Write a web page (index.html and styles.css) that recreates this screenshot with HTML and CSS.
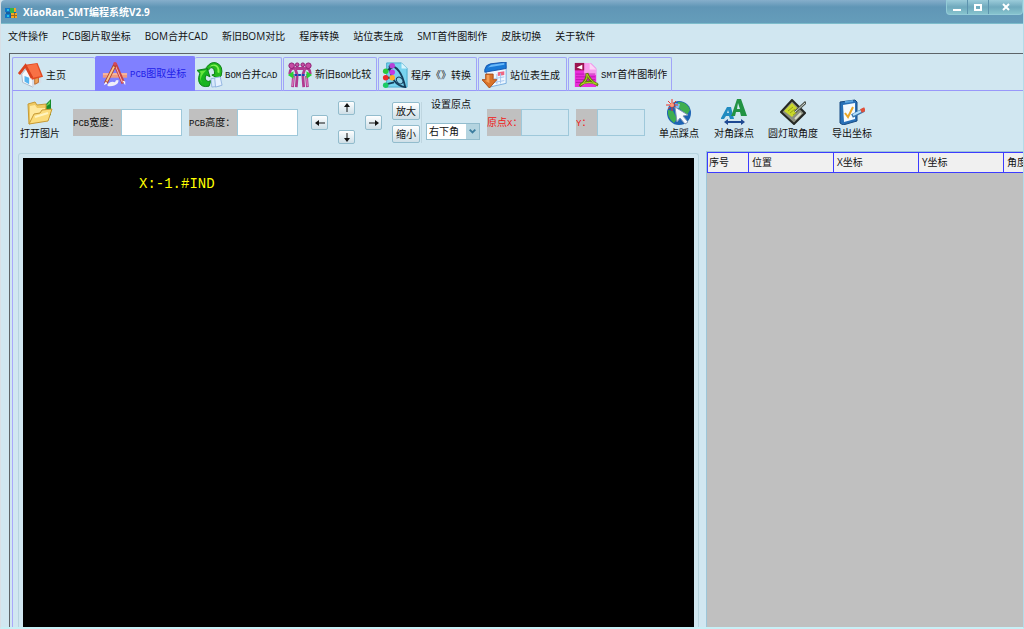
FILE: index.html
```html
<!DOCTYPE html>
<html lang="zh-CN">
<head>
<meta charset="utf-8">
<title>XiaoRan_SMT编程系统V2.9</title>
<link rel="stylesheet" href="styles.css">
</head>
<body>
<div class="app">
  <header class="titlebar">
    <svg class="logo" viewBox="0 0 12 12"><path fill="#17609c" d="M1 1h10v10H1z"/><path fill="#1277c8" d="M0 1h5v4H0zM0 7h5v4H0z"/><path fill="#35b34a" d="M5 1h4v5H5z"/><path fill="#f5a623" d="M6 6h6v5H6zM9 1h2v4H9z"/><path fill="#1fc3e8" d="M2 2h2v2H2zM2 8h2v2H2z"/><path fill="#9b6a20" d="M9 6h1v5H9zM6 8h6v1H6z"/></svg>
    <h1 class="title">XiaoRan_SMT编程系统V2.9</h1>
    <div class="window-buttons">
      <button class="winbtn" aria-label="最小化"><svg viewBox="0 0 10 8"><path fill="#fff" d="M1 6h8v2H1z"/></svg></button>
      <button class="winbtn" aria-label="最大化"><svg viewBox="0 0 10 8"><path fill="none" stroke="#fff" stroke-width="2" d="M2 2h6v5H2z"/></svg></button>
      <button class="winbtn winbtn-close" aria-label="关闭"><svg viewBox="0 0 10 8"><path fill="none" stroke="#fff" stroke-width="2" d="M2 1l6 6M8 1L2 7"/></svg></button>
    </div>
  </header>
  <nav class="menu">
    <button>文件操作</button><button>PCB图片取坐标</button><button>BOM合并CAD</button><button>新旧BOM对比</button><button>程序转换</button><button>站位表生成</button><button>SMT首件图制作</button><button>皮肤切换</button><button>关于软件</button>
  </nav>
  <main class="frame">
    <div class="tabs">
      <button class="tab tab-home">
        <svg viewBox="0 0 28 28"><path fill="#f4f8fc" stroke="#a9b6c6" d="M4 13l6-7 6 9v12L5 22z"/><path fill="#d6dde8" d="M15 15l10-3v10l-10 5z"/><path fill="#56b4ef" d="M7 15l5 2v7l-5-3z"/><path fill="#f0a355" stroke="#b8692c" d="M18 16l4-1v7l-4 2z"/><path fill="#e24a22" d="M8 3l13-2 6 15-12 3z"/><path fill="#f87145" d="M9 4l11-2 5 13-9 2z"/><path fill="none" stroke="#d9431f" stroke-width="3" d="M1 13L8 4l7 13"/></svg>主页</button>
      <button class="tab tab-pcb active">
        <svg viewBox="0 0 28 28"><path fill="#f09a80" d="M1 13h26v5H1z"/><path stroke="#ffd0b8" stroke-width="1" d="M1 14h26"/><path stroke="#c84145" stroke-width="4" d="M14 3l9 21"/><path stroke="#f7c1bb" stroke-width="1" d="M14 4l8 19"/><path stroke="#b2432d" stroke-width="4" d="M14 4L4 24"/><path stroke="#f8c98c" stroke-width="2" d="M13 6L5 22"/><circle cx="14" cy="3" r="2" fill="#d5485b"/><path fill="#fff" d="M2 26l2-4 2 2zM22 21l3 1v4z"/><path fill="#efeef9" d="M6 25q4-4 8-2 1-4 4-2l-1 3q-4 4-11 3z"/></svg><span class="label"><span class="latin">PCB</span>图取坐标</span></button>
      <button class="tab tab-bom">
        <svg viewBox="0 0 28 28"><path fill="#23b91e" stroke="#087b12" d="M10 6Q15-1 21 1q8 3 5 14l-3 3-7-4 3-1q0-7-4-7l-3 3z"/><path fill="#84f454" d="M13 5q5-4 9-1 3 3 2 8l-2-1q1-6-4-7z"/><path fill="#18b51e" stroke="#087b12" d="M0 9l11-2 3 9-4-2q-3 5 2 7l3-1-2 6Q4 28 2 21q-1-4 1-9z"/><path fill="#68e63e" d="M3 10l7-1-3 3q-5 6-1 11-4-4-2-11z"/><path fill="#d5e8fc" stroke="#92b4e0" d="M15 18l8-1 1 9-8 1z"/><path fill="#e4f0fe" stroke="#92b4e0" d="M19 17l6-1 2 9-7 2z"/></svg><span class="label"><span class="latin">BOM</span>合并<span class="latin">CAD</span></span></button>
      <button class="tab tab-compare">
        <svg viewBox="0 0 28 28"><g fill="none" stroke="#b13a90" stroke-width="3"><path d="M9 7Q3 6 3 12l4 3M19 7q6-1 6 5l-4 3M9 8l2 6M19 8l-2 6M7 15l-1 12M11 14l-1 13M21 15l1 12M17 14l1 13M9 7h10"/></g><g fill="#c64ca4" stroke="#8a1c70"><circle cx="5" cy="4" r="3"/><circle cx="23" cy="4" r="3"/><circle cx="11" cy="3" r="2"/><circle cx="17" cy="3" r="2"/></g><path stroke="#e58acb" d="M7 16L6 26M21 16l1 10"/><path fill="#27d233" d="M1 14l6-4v8zM27 14l-6-4v8z"/><path stroke="#1646b0" stroke-width="2" stroke-dasharray="3 1" d="M8 14h12"/></svg><span class="label">新旧<span class="latin">BOM</span>比较</span></button>
      <button class="tab tab-convert">
        <svg viewBox="0 0 28 28"><path fill="#78d3ef" stroke="#43a9cc" d="M5 1h16l6 6v20H5z"/><path fill="#d8f5fd" d="M21 1v6h6z"/><path fill="none" stroke="#153e5b" stroke-width="2" d="M8 4q12 0 17 23Q10 25 8 4M3 10l8-4M4 17h8M4 24l9-2"/><ellipse cx="19" cy="20" rx="4" ry="3" transform="rotate(50 19 20)" fill="#8ed4ea" stroke="#153e5b"/><circle cx="11" cy="4" r="3" fill="#b640d7"/><circle cx="4" cy="10" r="3" fill="#28c93d"/><circle cx="11" cy="11" r="3" fill="#c33ae4"/><circle cx="4" cy="17" r="3" fill="#ed2929"/><circle cx="11" cy="17" r="3" fill="#ffad28"/><circle cx="4" cy="25" r="3" fill="#1ccb65"/></svg><span class="label">程序《》转换</span></button>
      <button class="tab tab-station">
        <svg viewBox="0 0 28 28"><path fill="#edf7ff" stroke="#75acdf" d="M4 8l22-4v19L8 27z"/><path fill="#1979d6" stroke="#1454ad" d="M3 11V8q1-5 6-6l17-2v7z"/><path fill="#6ab9fa" d="M6 6l4-3 14-2v2z"/><path fill="#ef6783" d="M17 11l7-1v4l-7 1z"/><path stroke="#a3c5ee" d="M13 18l11-2M13 22l11-2M16 13v11M20 12v11"/><path fill="#d97328" stroke="#a84c14" d="M4 13h8v6h4L8 28 0 19h4z"/><path fill="#f3a057" d="M5 14h3v9l-5-3h2z"/></svg><span class="label">站位表生成</span></button>
      <button class="tab tab-first">
        <svg viewBox="0 0 28 28"><path fill="#e92fd9" d="M2 1h17l6 6v20H2z"/><path fill="#f89cee" d="M12 1h7l6 6v7H12z"/><path fill="#fbd6f6" d="M18 1l7 7h-7z"/><path stroke="#b815ad" d="M3 13h21M3 16h21M3 19h21M3 22h21"/><path fill="#9b144f" d="M2 1h10v8H2z"/><path fill="#fff" d="M4 6l6-3v5z"/><path fill="none" stroke="#5e7c0c" stroke-width="3" d="M15 12q1 8-8 14M15 12q3 9 12 13M8 24q9-5 18 0"/><path fill="none" stroke="#b8df24" d="M15 13q1 7-7 12M15 13q4 8 11 11M9 24q8-4 16 0"/></svg><span class="label"><span class="latin">SMT</span>首件图制作</span></button>
    </div>
    <section class="page">
      <div class="toolbar">
        <button class="tool tool-open">
          <svg viewBox="0 0 26 26"><path fill="#168c2c" d="M15 9l9-9v16l-6 2z"/><path fill="#6cd15b" d="M18 8l5-6v3z"/><path fill="#efca62" stroke="#c79a35" d="M1 5l7-2 2 3 9-1v15L2 25z"/><path fill="#ffe99f" d="M3 7l5-1 2 3h8v6L3 22z"/><path fill="#fbdc7c" stroke="#c79a35" d="M2 25l5-10 6-1 2-3 10-1-4 12z"/><path stroke="#fff4c0" stroke-width="2" d="M8 18l13-4"/></svg>打开图片</button>
        <div class="sizes">
          <div class="field"><label for="pw"><span class="latin">PCB</span>宽度：</label><input id="pw" type="text"></div>
          <div class="field"><label for="ph"><span class="latin">PCB</span>高度：</label><input id="ph" type="text"></div>
        </div>
        <div class="pad">
          <button class="push up" aria-label="上"><svg viewBox="0 0 10 10"><path class="stem" d="M5 9V3"/><path class="tip" d="M5 0l3 4H2z"/></svg></button>
          <button class="push left" aria-label="左"><svg viewBox="0 0 10 10"><path class="stem" d="M10 5H3"/><path class="tip" d="M0 5l4-3v6z"/></svg></button>
          <button class="push right" aria-label="右"><svg viewBox="0 0 10 10"><path class="stem" d="M0 5h7"/><path class="tip" d="M10 5L6 2v6z"/></svg></button>
          <button class="push down" aria-label="下"><svg viewBox="0 0 10 10"><path class="stem" d="M5 1v6"/><path class="tip" d="M5 10l3-4H2z"/></svg></button>
        </div>
        <div class="scale">
          <button class="push">放大</button>
          <button class="push">缩小</button>
        </div>
        <div class="origin">
          <label for="corner">设置原点</label>
          <div class="combo"><select id="corner"><option>右下角</option></select><svg viewBox="0 0 12 16"><path fill="none" stroke="#3c7d9f" stroke-width="2" d="M3 6l3 3 3-3"/></svg></div>
        </div>
        <div class="coords">
          <div class="field red"><label for="ox">原点<span class="latin">X</span>：</label><input id="ox" type="text" disabled></div>
          <div class="field red"><label for="oy"><span class="latin">Y</span>：</label><input id="oy" type="text" disabled></div>
        </div>
        <div class="actions">
          <button class="tool">
            <svg viewBox="0 0 26 26"><circle cx="13" cy="14" r="12" fill="#1c63b4"/><path fill="#3fae4f" d="M12 3q9-1 12 8l-3 5-6-5-3-3zM2 11l5 1 4 8-3 4q-7-5-6-13z"/><path fill="#7fc0f2" d="M9 4l5 1-1 4-3 1z"/><path stroke="#ed3527" stroke-width="1" d="M6 0v12M0 6h12M2 2l8 8M10 2l-8 8"/><circle cx="6" cy="6" r="2" fill="#ff9d78"/><path fill="#f6faff" stroke="#8296b4" d="M9 8l13 8-5 1 5 6-3 2-5-6-3 4z"/></svg>单点踩点</button>
          <button class="tool">
            <svg viewBox="0 0 26 26"><path fill="#218bc0" d="M0 20v-1L6 8h4l3 12H9l-1-3H5l-2 3zM6 14h2l-1-3z"/><path fill="#229343" d="M10 17l1-2 5-15h4l6 17h-6l-1-4h-4l-1 4zM16 10h3l-2-6z"/><path fill="none" stroke="#1e4992" stroke-width="2" d="M5 23h17"/><path fill="#1e4992" d="M3 23l4-3v6zM24 23l-4-3v6z"/></svg>对角踩点</button>
          <button class="tool">
            <svg viewBox="0 0 26 26"><path fill="#8b8e80" stroke="#252824" stroke-width="2" d="M1 13L12 1l13 13-11 11z"/><path fill="#c9d82b" d="M4 12l8-8 7 7-7 7z"/><path stroke="#93a31a" d="M8 12l5-4M10 14l5-4M13 16l4-3"/><path stroke="#d7dbc8" stroke-width="2" d="M15 20l6-6"/><path stroke="#4e554e" stroke-width="3" d="M15 13L26 3"/><path stroke="#d3dad5" d="M15 13L25 4"/></svg>圆灯取角度</button>
          <button class="tool">
            <svg viewBox="0 0 26 26"><path fill="#2870b7" stroke="#174980" d="M1 3l15-2 2 2v19L4 26l-3-2z"/><path fill="#f4faff" d="M4 6l12-2v16L5 23z"/><path stroke="#5ca5df" stroke-width="2" d="M6 3l8-1"/><path fill="none" stroke="#e9a526" stroke-width="2" d="M6 14l3 4 5-10"/><path stroke="#3a75ab" stroke-width="4" d="M13 17l12-6"/><path stroke="#b4defa" stroke-width="2" d="M14 16l8-4"/><path stroke="#e15039" stroke-width="4" d="M22 12l4-2"/></svg>导出坐标</button>
        </div>
      </div>
      <div class="work">
        <div class="viewer"><div class="canvas">X:-1.#IND</div></div>
        <div class="grid">
          <table>
            <thead><tr><th class="col-no">序号</th><th>位置</th><th>X坐标</th><th>Y坐标</th><th>角度</th></tr></thead>
          </table>
        </div>
      </div>
    </section>
  </main>
</div>
</body>
</html>
```
FILE: styles.css
```css
* { box-sizing: border-box; }

body {
  margin: 0;
  background: #d1e7f1;
  color: #111;
  font: 10px/14px "Open Sans", "Noto Sans CJK SC", sans-serif;
  text-spacing-trim: space-all;
}

button, input, select { font: inherit; color: inherit; }
button { border: 0; padding: 0; background: none; white-space: nowrap; text-spacing-trim: space-all; }
svg { display: block; flex: none; }

.app {
  display: flex;
  flex-direction: column;
  height: 100vh;
  border-left: 1px solid #d9dfe6;
  border-right: 1px solid #b4dbe8;
  border-bottom: 2px solid #c8f0f6;
}

/* Title bar */
.titlebar {
  display: flex;
  align-items: flex-start;
  height: 24px;
  padding-left: 4px;
  background: linear-gradient(#86aecb, #6096b6 30%, #659dba);
  border-bottom: 1px solid #7cbccb;
  border-radius: 4px 4px 0 0;
}
.logo { width: 12px; height: 12px; margin: 7px 6px 0 0; }
.title {
  flex: 1;
  margin: 0;
  color: #fff;
  font-size: 10px;
  font-weight: 700;
  line-height: 24px;
}
.window-buttons {
  display: flex;
  height: 15px;
  background: linear-gradient(#9cccda, #6fa9bd 50%, #86c3cd);
  border: 1px solid #93cbd7;
  border-top: 0;
  border-radius: 0 0 4px 4px;
}
.winbtn { display: grid; place-items: center; width: 21px; border-right: 1px solid #5c93ae; }
.winbtn-close { width: 33px; border-right: 0; }
.winbtn svg { width: 10px; height: 8px; }

/* Menu */
.menu { display: flex; gap: 14px; height: 29px; padding: 0 7px 6px; }

/* Tabs */
.frame {
  display: flex;
  flex-direction: column;
  flex: 1;
  min-height: 0;
  margin-left: 8px;
  padding: 2px 0 0 2px;
  border-top: 1px solid #5d6468;
  border-left: 1px solid #5d6468;
}
.tabs { display: flex; height: 35px; border-bottom: 1px solid #9898fa; }
.tab {
  display: flex;
  align-items: center;
  gap: 2px;
  height: 34px;
  margin: 1px 1px 0 0;
  padding: 0 3px;
  border: 1px solid #a0a4f8;
  border-bottom: 0;
  border-radius: 2px 2px 0 0;
}
.tab svg { width: 26px; height: 26px; }
.tab-home { width: 83px; margin-right: 0; padding-left: 5px; border-right: 0; }
.tab-pcb { width: 100px; margin-right: 0; padding-left: 6px; }
.tab-bom { width: 87px; padding-left: 2px; border-left: 0; }
.tab-compare { width: 94px; }
.tab-convert { width: 99px; gap: 3px; }
.tab-station { width: 89px; }
.tab-first { width: 104px; padding-left: 4px; }
.tab.active { margin-top: 0; height: 35px; background: #8080ff; border-color: #8080ff; color: #2020e8; }
.latin { font-family: "Liberation Mono", monospace; font-size: 9px; }

/* Toolbar */
.page {
  display: flex;
  flex-direction: column;
  flex: 1;
  min-height: 0;
  border-left: 1px solid #a9a8fa;
}
.toolbar { display: flex; align-items: center; height: 60px; padding: 3px 4px 0 7px; }
.tool {
  display: flex;
  flex-direction: column;
  align-items: center;
  align-self: flex-start;
  margin-top: 5px;
}
.tool svg { width: 26px; height: 26px; margin-bottom: 1px; }
.tool-open { margin-right: 13px; }
.sizes, .coords { display: flex; gap: 7px; }
.field { display: flex; height: 27px; background: #c0c0c0; line-height: 27px; white-space: nowrap; }
.field label { width: 48px; overflow: hidden; }
.field input { width: 61px; padding: 0 3px; border: 1px solid #9ec8da; background: #fff; }
.red { color: #f01818; }
.red label { width: 34px; }
.red + .red label { width: 21px; }
.red input { width: 48px; background: #d1e7f1; }

.push {
  display: grid;
  place-items: center;
  border: 1px solid #92bccd;
  border-radius: 2px;
  background: linear-gradient(#fff, #e5eff4 50%, #cfdfe7);
}
.pad {
  display: grid;
  grid-template-columns: 17px 17px 17px;
  grid-template-rows: 14px 15px 14px;
  column-gap: 10px;
  margin: 0 10px 0 13px;
}
.pad svg { width: 10px; height: 10px; }
.stem { stroke: #111; }
.tip { fill: #111; }
.up { grid-area: 1 / 2; }
.left { grid-area: 2 / 1; }
.right { grid-area: 2 / 3; }
.down { grid-area: 3 / 2; }
.scale {
  display: grid;
  grid-template-rows: 18px 18px;
  gap: 5px;
  margin-right: 4px;
  padding-right: 1px;
  border-right: 1px solid #bfd6e0;
}
.scale .push { width: 28px; }
.origin { display: flex; flex-direction: column; gap: 12px; margin: 0 7px 8px 0; }
.origin label { padding-left: 5px; }
.combo { display: grid; grid-template-columns: 1fr 13px; width: 54px; height: 17px; border: 1px solid #92bccd; }
.combo select {
  grid-area: 1 / 1 / 2 / 3;
  appearance: none;
  padding: 0 0 0 2px;
  border: 0;
  border-radius: 0;
  background: #fff;
  line-height: 15px;
}
.combo svg { grid-area: 1 / 2; width: 13px; height: 15px; background: #b4d4e0; pointer-events: none; }
.actions { display: flex; align-self: flex-start; gap: 13px; margin-left: 13px; }
.actions .tool { min-width: 42px; }

/* Work area */
.work { display: flex; flex: 1; gap: 7px; min-height: 0; padding-left: 5px; }
.viewer {
  flex: 675;
  display: flex;
  min-width: 0;
  margin-top: 2px;
  padding: 4px 4px 0;
  border: 1px solid #b7d4df;
  border-bottom: 0;
  border-radius: 3px 3px 0 0;
}
.canvas {
  flex: 1;
  padding: 17px 116px;
  background: #000;
  color: #ffff00;
  font: 14px/18px "Liberation Mono", monospace;
}
.grid {
  flex: 318;
  min-width: 0;
  overflow: hidden;
  border-left: 1px solid #9dc6d8;
  border-top: 1px solid #9dc6d8;
  background: #c0c0c0;
}
table { width: 382px; table-layout: fixed; border-collapse: collapse; }
th {
  width: 85px;
  height: 20px;
  padding: 0 3px 1px;
  border: 1px solid #3c3cff;
  background: #f0f0f0;
  font-weight: 400;
  text-align: left;
}
.col-no { width: 41px; padding: 0 1px 1px; }
```
